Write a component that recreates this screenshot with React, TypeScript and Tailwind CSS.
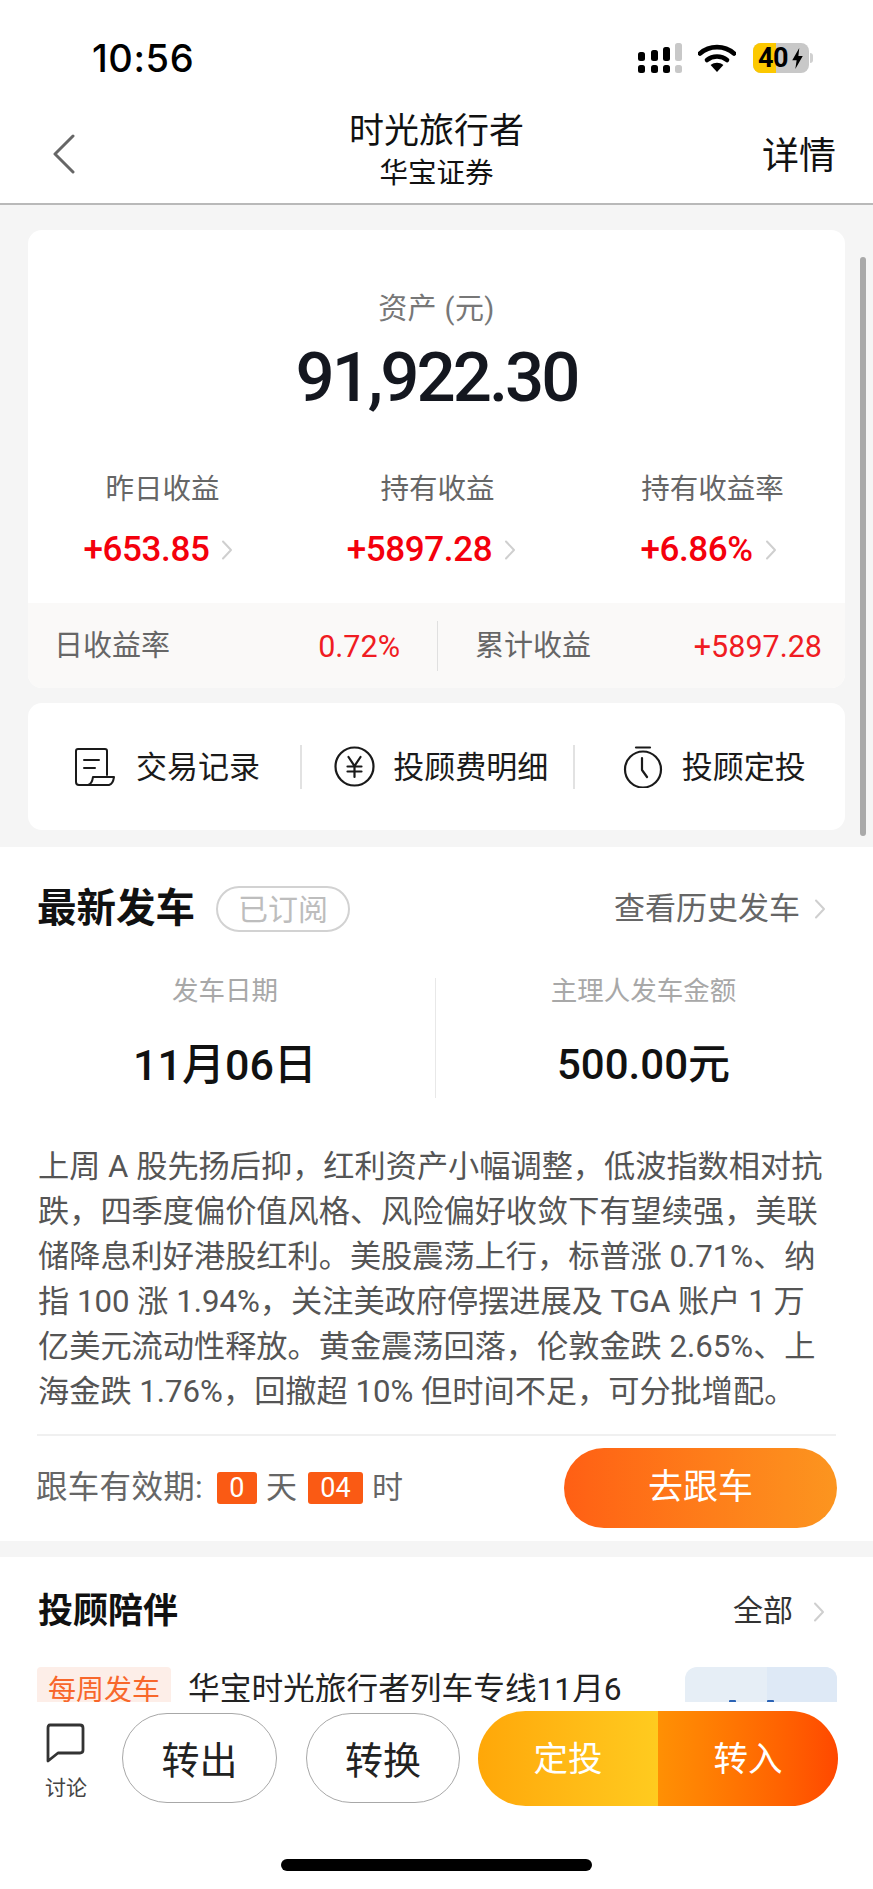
const F = `font-['Roboto','Noto_Sans_CJK_SC',sans-serif]`;

function Chevron({ className = "" }: { className?: string }) {
  return (
    <svg viewBox="0 0 12 20" fill="none" className={className}>
      <path d="M2 1.5 L10 10 L2 18.5" stroke="#cfcfcf" strokeWidth="2" strokeLinecap="round" strokeLinejoin="round" />
    </svg>
  );
}

function StatusBar() {
  return (
    <div className="h-[88px] flex items-start relative">
      <div className="ml-[92px] mt-[38px] text-[38px] leading-[40px] font-medium text-black tracking-[0.6px] font-['Inter',sans-serif]">10:56</div>
      <svg viewBox="0 0 45 32" className="absolute left-[638px] top-[43px] w-[45px] h-[32px]">
        <rect x="0" y="9" width="7" height="9" rx="2.5" fill="#000" />
        <rect x="13" y="7" width="7" height="11" rx="2.5" fill="#000" />
        <rect x="25" y="4" width="7" height="14" rx="2.5" fill="#000" />
        <rect x="37" y="0" width="7" height="18" rx="2.5" fill="#c8c8c8" />
        <rect x="0" y="22" width="7" height="8" rx="2.5" fill="#000" />
        <rect x="13" y="22" width="7" height="8" rx="2.5" fill="#000" />
        <rect x="25" y="22" width="7" height="8" rx="2.5" fill="#000" />
        <rect x="37" y="22" width="7" height="8" rx="2.5" fill="#c8c8c8" />
      </svg>
      <svg viewBox="0 0 38 28" className="absolute left-[698px] top-[44px] w-[38px] h-[28px]" fill="none">
        <path d="M2 9.5 C11.5 1 26.5 1 36 9.5" stroke="#000" strokeWidth="4.6" strokeLinecap="round" />
        <path d="M9 16 C14.5 11.4 23.5 11.4 29 16" stroke="#000" strokeWidth="4.6" strokeLinecap="round" />
        <path d="M12.6 21 C16.5 18 21.5 18 25.4 21 L19 28 Z" fill="#000" />
      </svg>
      <div className="absolute left-[753px] top-[43px] w-[56px] h-[30px] rounded-[8px] overflow-hidden bg-[#c8c8c8] flex">
        <div className="w-[23px] h-full bg-[#fcc800]" />
      </div>
      <div className="absolute left-[758px] top-[43px] h-[30px] flex items-center text-[27px] leading-[30px] font-bold text-black tracking-[-0.5px] font-['Roboto',sans-serif]">
        40
      </div>
      <svg viewBox="0 0 14 24" className="absolute left-[791px] top-[48px] w-[13px] h-[21px]">
        <path d="M9 0 L1 14 H6 L4.5 24 L13 9 H8 Z" fill="#000" />
      </svg>
      <div className="absolute left-[810px] top-[53px] w-[3px] h-[10px] rounded-r-full bg-[#d0d0d0]" />
    </div>
  );
}

function NavBar() {
  return (
    <div className="h-[117px] border-b-2 border-[#b9b9b9] grid grid-cols-[1fr_auto_1fr] items-start">
      <div className="pl-[52px] pt-[46px]">
        <svg viewBox="0 0 23 40" className="w-[23px] h-[40px]" fill="none">
          <path d="M21 2 L3 20 L21 38" stroke="#666" strokeWidth="3" strokeLinecap="round" strokeLinejoin="round" />
        </svg>
      </div>
      <div className="flex flex-col items-center pt-[22px]">
        <div className="text-[35px] leading-[44px] text-[#111]">时光旅行者</div>
        <div className="text-[28.5px] leading-[38px] text-[#111] mt-[1px]">华宝证券</div>
      </div>
      <div className="text-right pr-[37px] pt-[47px] text-[37px] leading-[44px] text-[#111]">详情</div>
    </div>
  );
}

function StatCell({ label, value, shift }: { label: string; value: string; shift: string }) {
  return (
    <div className="flex flex-col items-center">
      <div className="text-[28.5px] leading-[40px] text-[#666] translate-y-[2px]">{label}</div>
      <div className={`flex items-center gap-[12px] mt-[20px] ${shift}`}>
        <div className="text-[35px] leading-[44px] font-medium text-[#f4000c] tracking-[-0.4px]">{value}</div>
        <Chevron className="w-[12px] h-[20px]" />
      </div>
    </div>
  );
}

function AssetCard() {
  return (
    <div className="bg-white rounded-[14px] overflow-hidden">
      <div className="h-[373px] pt-[59px]">
        <div className="text-[29px] leading-[40px] text-[#777] text-center tracking-[0.4px]">资产 (元)</div>
        <div className="text-[69px] leading-[80px] mt-[9px] font-medium text-[#14171f] text-center tracking-[-3px]">91,922.30</div>
        <div className="grid grid-cols-[275px_275px_275px] mt-[50px] -ml-[3px]">
          <StatCell label="昨日收益" value="+653.85" shift="-translate-x-[4px]" />
          <StatCell label="持有收益" value="+5897.28" shift="-translate-x-[6px]" />
          <StatCell label="持有收益率" value="+6.86%" shift="-translate-x-[4px]" />
        </div>
      </div>
      <div className="h-[85px] bg-[#faf9f8] flex items-center">
        <div className="w-[409px] pl-[26px] pr-[37px] flex items-center justify-between translate-y-[1px]">
          <span className="text-[29px] text-[#666]">日收益率</span>
          <span className="text-[30.5px] text-[#f01c22]">0.72%</span>
        </div>
        <div className="w-px h-[50px] bg-[#e0e0e0]" />
        <div className="flex-1 pl-[37px] pr-[23px] flex items-center justify-between translate-y-[1px]">
          <span className="text-[29px] text-[#666]">累计收益</span>
          <span className="text-[30.5px] text-[#f01c22]">+5897.28</span>
        </div>
      </div>
    </div>
  );
}

function ToolsCard() {
  return (
    <div className="bg-white rounded-[14px] h-[127px] mt-[15px] grid grid-cols-3 items-center">
      <div className="h-[44px] pl-[47px] flex items-center gap-[21px]">
        <svg viewBox="0 0 40 38" className="w-[40px] h-[38px]" fill="none" stroke="#1a1a1a" strokeWidth="2" strokeLinejoin="round" strokeLinecap="round">
          <path d="M18 37 H4 Q1 37 1 34 V3 Q1 1 3 1 H30 Q32 1 32 3 V27" />
          <path d="M9 12 H24 M9 20 H20" />
          <path d="M13 37 Q17 36 18 29 H39 Q38 36 34 37 Z" />
        </svg>
        <span className="text-[31px] leading-[44px] text-[#1a1a1a] translate-y-[1px]">交易记录</span>
      </div>
      <div className="h-[44px] pl-[32px] border-l-2 border-[#e2e2e2] flex items-center gap-[18px]">
        <svg viewBox="0 0 41 41" className="w-[41px] h-[41px]" fill="none" stroke="#1a1a1a" strokeWidth="2.2" strokeLinecap="round">
          <circle cx="20.5" cy="20.5" r="19" />
          <path d="M14.5 11 L20.5 20 L26.5 11 M13.5 20.5 H27.5 M13.5 25.5 H27.5 M20.5 20 V31" />
        </svg>
        <span className="text-[31px] leading-[44px] text-[#1a1a1a] translate-y-[1px]">投顾费明细</span>
      </div>
      <div className="h-[44px] pl-[48px] border-l-2 border-[#e2e2e2] flex items-center gap-[19px]">
        <svg viewBox="0 0 40 42" className="w-[40px] h-[42px]" fill="none" stroke="#1a1a1a" strokeWidth="2.2" strokeLinecap="round" strokeLinejoin="round">
          <path d="M13 1.5 H27" />
          <circle cx="20" cy="23.5" r="18" />
          <path d="M19 12 V24 L24 31" />
        </svg>
        <span className="text-[31px] leading-[44px] text-[#1a1a1a] translate-y-[1px]">投顾定投</span>
      </div>
    </div>
  );
}

const LINES = [
  "上周 A 股先扬后抑，红利资产小幅调整，低波指数相对抗",
  "跌，四季度偏价值风格、风险偏好收敛下有望续强，美联",
  "储降息利好港股红利。美股震荡上行，标普涨 0.71%、纳",
  "指 100 涨 1.94%，关注美政府停摆进展及 TGA 账户 1 万",
  "亿美元流动性释放。黄金震荡回落，伦敦金跌 2.65%、上",
  "海金跌 1.76%，回撤超 10% 但时间不足，可分批增配。",
];

function DepartSection() {
  return (
    <div className="bg-white pt-[39px] pb-[13px]">
      <div className="h-[46px] pl-[37px] pr-[36px] flex items-center">
        <div className="text-[39.5px] leading-[46px] font-bold text-[#111]">最新发车</div>
        <div className="ml-[21px] w-[134px] h-[46px] rounded-full border-2 border-[#d2d2d2] flex items-center justify-center text-[30px] text-[#bdbdbd]">已订阅</div>
        <div className="ml-auto text-[31px] text-[#666]">查看历史发车</div>
        <Chevron className="w-[12px] h-[20px] ml-[14px] mr-[11px]" />
      </div>
      <div className="mt-[46px] h-[120px] pl-[11px] flex">
        <div className="w-[424px] flex flex-col items-center">
          <div className="text-[26.5px] leading-[26px] text-[#a8a8a8] translate-x-[2px]">发车日期</div>
          <div className="text-[43px] leading-[60px] mt-[31px] font-medium text-[#111] translate-x-[2px]">11月06日</div>
        </div>
        <div className="w-[416px] border-l border-[#e8e8e8] flex flex-col items-center">
          <div className="text-[26.5px] leading-[26px] text-[#a8a8a8]">主理人发车金额</div>
          <div className="text-[42px] leading-[60px] mt-[31px] font-medium text-[#111]">500.00元</div>
        </div>
      </div>
      <div className="mt-[46px] px-[38px]">
        {LINES.map((l) => (
          <div key={l} className="text-[31.2px] leading-[45px] text-[#555] whitespace-pre">{l}</div>
        ))}
      </div>
      <div className="mx-[37px] mt-[20px] h-[2px] bg-[#f0f0f0]" />
      <div className="mt-[12px] pl-[36px] pr-[36px] h-[80px] flex items-center">
        <span className="text-[31.5px] text-[#666] tracking-[0.3px]">跟车有效期:</span>
        <span className="ml-[14px] w-[40px] h-[32px] rounded-[3px] bg-[#fa5a14] text-white text-[27px] leading-[32px] text-center">0</span>
        <span className="ml-[9px] text-[31px] text-[#666]">天</span>
        <span className="ml-[11px] w-[55px] h-[32px] rounded-[3px] bg-[#fa5a14] text-white text-[27px] leading-[32px] text-center">04</span>
        <span className="ml-[9px] text-[31px] text-[#666]">时</span>
        <div className="ml-auto w-[273px] h-[80px] rounded-full bg-gradient-to-r from-[#ff5f14] to-[#fc951f] flex items-center justify-center text-[35px] text-white">去跟车</div>
      </div>
    </div>
  );
}

function CompanySection() {
  return (
    <div className="bg-white mt-[16px] pt-[32px] h-[400px]">
      <div className="h-[46px] pl-[38px] pr-[36px] flex items-center">
        <div className="text-[35px] leading-[46px] font-bold text-[#111]">投顾陪伴</div>
        <div className="ml-auto text-[30px] text-[#333] -translate-y-[2px]">全部</div>
        <Chevron className="w-[12px] h-[20px] ml-[20px] mr-[12px]" />
      </div>
      <div className="mt-[32px] pl-[37px] pr-[36px] flex items-start">
        <div className="w-[134px] h-[48px] bg-[#fdeee8] rounded-t-[4px] text-[28px] leading-[48px] text-[#f8672b] text-center">每周发车</div>
        <div className="ml-[17px] text-[31.7px] leading-[46px] text-[#222]">华宝时光旅行者列车专线11月6</div>
        <div className="ml-auto w-[152px] h-[90px] rounded-[12px] overflow-hidden bg-[#e6eef6] flex relative">
          <div className="ml-auto w-[70px] h-full bg-[#deE9f6]" />
          <div className="absolute left-[44px] top-[33px] w-[7px] h-[3px] rounded-[1px] bg-[#2b63b5]" />
          <div className="absolute left-[82px] top-[33px] w-[7px] h-[3px] rounded-[1px] bg-[#2b63b5]" />
          <div className="absolute left-[92px] top-[35px] w-[21px] h-[1px] bg-[#2b63b5]" />
        </div>
      </div>
    </div>
  );
}

function BottomBar() {
  return (
    <div className="h-[187px] bg-white relative">
      <div className="pt-[9px] flex items-start">
        <div className="w-[122px] pl-[45px] flex flex-col">
          <svg viewBox="0 0 40 40" className="w-[40px] h-[40px] mt-[12px]" fill="none">
            <path d="M5 2 H35 Q38 2 38 5 V27 Q38 30 35 30 H13 L3 38 V5 Q3 2 5 2 Z" stroke="#333" strokeWidth="2.8" strokeLinejoin="round" />
          </svg>
          <div className="text-[21px] leading-[28px] text-[#444] mt-[11px]">讨论</div>
        </div>
        <div className="mt-[2px] w-[155px] h-[90px] rounded-full border border-[#a8a8a8] flex items-center justify-center text-[38px] text-[#222]"><span className="translate-y-[3px]">转出</span></div>
        <div className="mt-[2px] ml-[29px] w-[154px] h-[90px] rounded-full border border-[#a8a8a8] flex items-center justify-center text-[38px] text-[#222]"><span className="translate-y-[3px]">转换</span></div>
        <div className="ml-[18px] w-[360px] h-[95px] rounded-full overflow-hidden flex">
          <div className="w-[180px] bg-gradient-to-r from-[#ffa708] to-[#ffcb1f] flex items-center justify-center text-[34.5px] text-white"><span className="translate-y-[1px]">定投</span></div>
          <div className="flex-1 bg-gradient-to-r from-[#ff9004] to-[#ff4800] flex items-center justify-center text-[34.5px] text-white"><span className="translate-y-[1px]">转入</span></div>
        </div>
      </div>
      <div className="mt-[53px] ml-[281px] w-[311px] h-[12px] rounded-full bg-black" />
    </div>
  );
}

export default function App() {
  return (
    <div className={`w-[873px] h-[1889px] bg-white overflow-hidden relative flex flex-col ${F}`}>
      <StatusBar />
      <NavBar />
      <div className="flex-1 overflow-hidden bg-[#f5f5f5]">
        <div className="px-[28px] pt-[25px] pb-[17px]">
          <AssetCard />
          <ToolsCard />
        </div>
        <DepartSection />
        <CompanySection />
      </div>
      <BottomBar />
      <div className="absolute left-[860px] top-[257px] w-[6px] h-[579px] rounded-full bg-[#a9a9a9]" />
    </div>
  );
}
